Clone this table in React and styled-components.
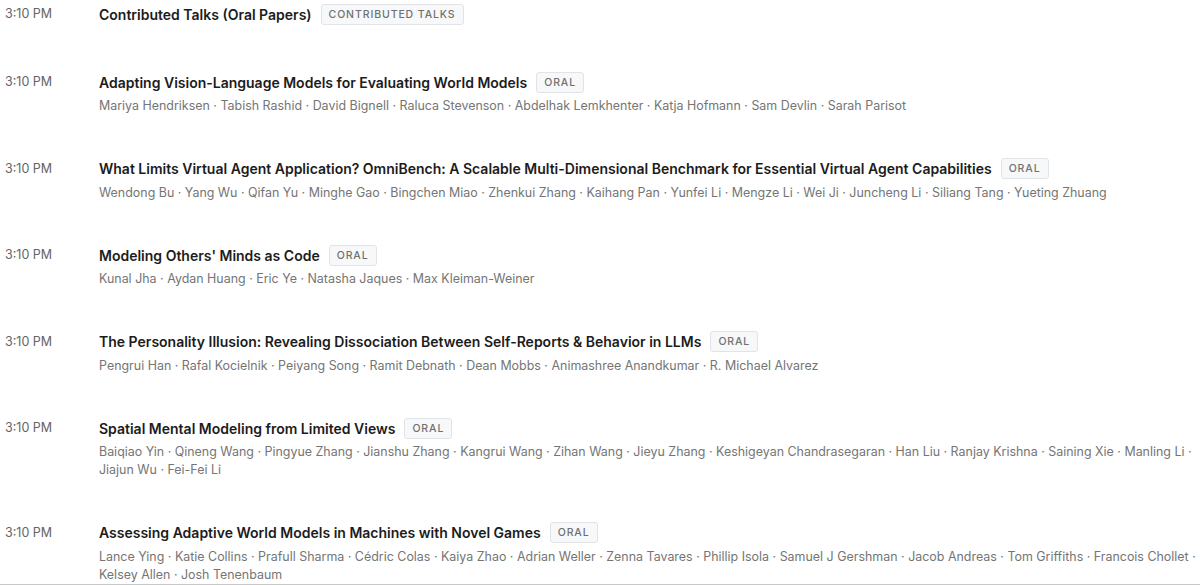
import React from 'react';
import styled, { createGlobalStyle } from 'styled-components';

const GlobalStyle = createGlobalStyle`
  html, body {
    margin: 0;
    padding: 0;
    background: #ffffff;
    font-family: Inter, "Liberation Sans", Arial, sans-serif;
    -webkit-font-smoothing: antialiased;
  }
`;

const talks = [
  {
    title: 'Contributed Talks (Oral Papers)',
    tag: 'Contributed Talks',
    authors: [],
  },
  {
    title: 'Adapting Vision-Language Models for Evaluating World Models',
    tag: 'Oral',
    authors: ['Mariya Hendriksen', 'Tabish Rashid', 'David Bignell', 'Raluca Stevenson', 'Abdelhak Lemkhenter', 'Katja Hofmann', 'Sam Devlin', 'Sarah Parisot'],
  },
  {
    title: 'What Limits Virtual Agent Application? OmniBench: A Scalable Multi-Dimensional Benchmark for Essential Virtual Agent Capabilities',
    tag: 'Oral',
    authors: ['Wendong Bu', 'Yang Wu', 'Qifan Yu', 'Minghe Gao', 'Bingchen Miao', 'Zhenkui Zhang', 'Kaihang Pan', 'Yunfei Li', 'Mengze Li', 'Wei Ji', 'Juncheng Li', 'Siliang Tang', 'Yueting Zhuang'],
  },
  {
    title: "Modeling Others' Minds as Code",
    tag: 'Oral',
    authors: ['Kunal Jha', 'Aydan Huang', 'Eric Ye', 'Natasha Jaques', 'Max Kleiman-Weiner'],
  },
  {
    title: 'The Personality Illusion: Revealing Dissociation Between Self-Reports & Behavior in LLMs',
    tag: 'Oral',
    authors: ['Pengrui Han', 'Rafal Kocielnik', 'Peiyang Song', 'Ramit Debnath', 'Dean Mobbs', 'Animashree Anandkumar', 'R. Michael Alvarez'],
  },
  {
    title: 'Spatial Mental Modeling from Limited Views',
    tag: 'Oral',
    authors: ['Baiqiao Yin', 'Qineng Wang', 'Pingyue Zhang', 'Jianshu Zhang', 'Kangrui Wang', 'Zihan Wang', 'Jieyu Zhang', 'Keshigeyan Chandrasegaran', 'Han Liu', 'Ranjay Krishna', 'Saining Xie', 'Manling Li', 'Jiajun Wu', 'Fei-Fei Li'],
  },
  {
    title: 'Assessing Adaptive World Models in Machines with Novel Games',
    tag: 'Oral',
    authors: ['Lance Ying', 'Katie Collins', 'Prafull Sharma', 'Cédric Colas', 'Kaiya Zhao', 'Adrian Weller', 'Zenna Tavares', 'Phillip Isola', 'Samuel J Gershman', 'Jacob Andreas', 'Tom Griffiths', 'Francois Chollet', 'Kelsey Allen', 'Josh Tenenbaum'],
  },
];

function App() {
  return (
    <>
      <GlobalStyle />
      <Schedule>
        {talks.map((talk, i) => (
          <Row key={i} $bare={talk.authors.length === 0}>
            <Time>3:10 PM</Time>
            <Content>
              <TitleLine>
                <Title>{talk.title}</Title>
                <Badge>{talk.tag}</Badge>
              </TitleLine>
              {talk.authors.length > 0 && (
                <Authors>{talk.authors.join('\u00a0· ')}</Authors>
              )}
            </Content>
          </Row>
        ))}
      </Schedule>
    </>
  );
}

export default App;

const Schedule = styled.div`
  width: 1200px;
  height: 585px;
  overflow: hidden;
  box-sizing: border-box;
  padding: 3px 0 0 5px;
  border-bottom: 1px solid #c8c8c8;
  display: flex;
  flex-direction: column;
`;

const Row = styled.div`
  display: flex;
  align-items: flex-start;
  flex-shrink: 0;
  padding-bottom: ${(p) => (p.$bare ? '46px' : '42.5px')};
`;

const Time = styled.div`
  width: 94px;
  flex-shrink: 0;
  font-size: 12.5px;
  line-height: 22px;
  color: #646464;
`;

const Content = styled.div`
  flex: 1;
  min-width: 0;
`;

const TitleLine = styled.div`
  display: flex;
  align-items: center;
  gap: 9px;
  height: 22px;
`;

const Title = styled.div`
  font-size: 14px;
  font-weight: 600;
  color: #1c1c1c;
  white-space: nowrap;
`;

const Badge = styled.span`
  display: inline-flex;
  align-items: center;
  height: 21px;
  padding: 0 7px;
  box-sizing: border-box;
  border: 1px solid #e2e3e6;
  border-radius: 3px;
  background: #f7f8f9;
  color: #707070;
  font-size: 10.5px;
  font-weight: 500;
  letter-spacing: 0.9px;
  text-transform: uppercase;
`;

const Authors = styled.div`
  margin-top: 4px;
  font-size: 12.45px;
  line-height: 18px;
  color: #757575;
`;
